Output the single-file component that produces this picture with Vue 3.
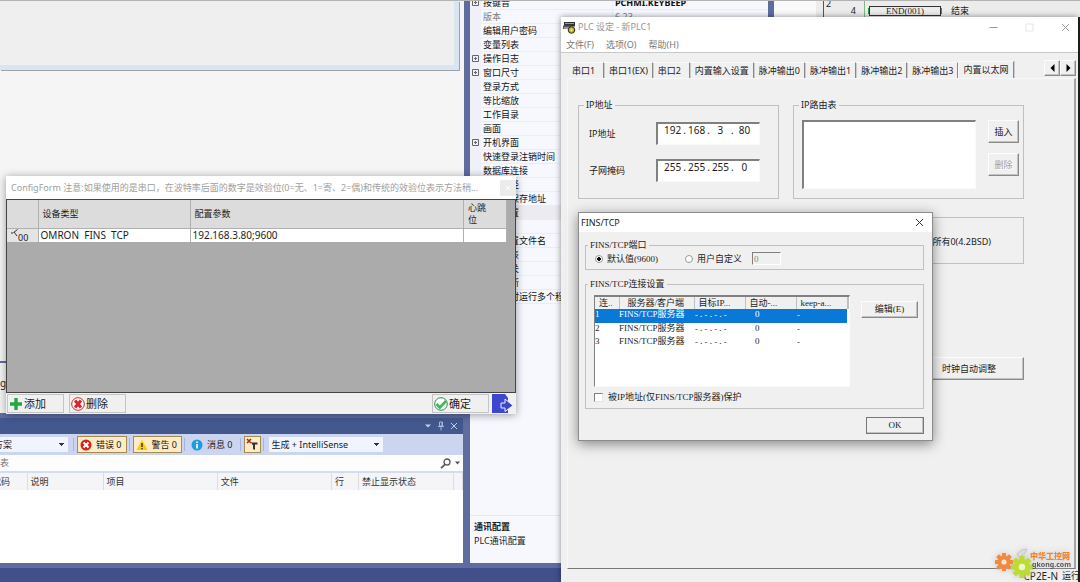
<script setup>
import { ref } from 'vue'

const properties = [
  { name: '按键音', value: 'PCHMI.KEYBEEP', expand: true, strong: true },
  { name: '版本', value: '6.23', muted: true },
  { name: '编辑用户密码' },
  { name: '变量列表' },
  { name: '操作日志', expand: true },
  { name: '窗口尺寸', expand: true },
  { name: '登录方式' },
  { name: '等比缩放' },
  { name: '工作目录' },
  { name: '画面' },
  { name: '开机界面', expand: true },
  { name: '快速登录注销时间' },
  { name: '数据库连接' },
  { name: '程序路径' },
  { name: '数据库保存地址' },
  { name: '通讯配置', selected: true },
  { name: '' },
  { name: '通讯配置文件名' },
  { name: '项目列表' },
  { name: '系统开关' },
  { name: '自动更新' },
  { name: '允许同时运行多个程序' }
]

const errorColumns = [
  { label: '代码', cls: 'c-code' },
  { label: '说明', cls: 'c-desc' },
  { label: '项目', cls: 'c-wide' },
  { label: '文件', cls: 'c-wide' },
  { label: '行', cls: 'c-line' },
  { label: '禁止显示状态', cls: 'c-state' },
  { label: '', cls: 'c-end' }
]

const tabs = ['串口1', '串口1(EX)', '串口2', '内置输入设置', '脉冲输出0', '脉冲输出1', '脉冲输出2', '脉冲输出3', '内置以太网']
const activeTab = ref(8)

const addresses = ref([
  { label: 'IP地址', parts: ['192', '168', '3', '80'] },
  { label: '子网掩码', parts: ['255', '255', '255', '0'] }
])

const connections = [1, 2, 3]
const selectedConnection = ref(1)
const portMode = ref('default')
const protect = ref(false)
</script>

<template>
  <div class="desktop">
    <div class="workspace">
      <section class="left-pane">
        <div class="designer">
          <div class="canvas"></div>
          <div class="doc-strip">g</div>
        </div>
        <div class="error-list">
          <header class="error-title">
            <button aria-label="菜单"><svg width="8" height="8" viewBox="0 0 8 8"><path d="M1 2.500h6L4 5.500z" fill="#c5cfea" /></svg></button>
            <button aria-label="固定"><svg width="8" height="10" viewBox="0 0 8 10"><path d="M2.500 1h3v4h-3zM1 5.500h6M4 5.500v4M5 1v4" fill="none" stroke="#a9b6da" /></svg></button>
            <button aria-label="关闭"><svg width="8" height="8" viewBox="0 0 8 8"><path d="M1 1l6 6M7 1l-6 6" stroke="#c5cfea" /></svg></button>
          </header>
          <div class="error-tools">
            <select class="scope" aria-label="范围"><option>方案</option></select>
            <i class="sep"></i>
            <button class="filter on">
              <svg width="12" height="12" viewBox="0 0 12 12"><circle cx="6" cy="6" r="5.500" fill="#d8211c" /><path d="M3.500 3.500l5 5M8.500 3.500l-5 5" stroke="#fff" stroke-width="2" /></svg>错误 0
            </button>
            <i class="sep"></i>
            <button class="filter on">
              <svg width="12" height="12" viewBox="0 0 12 12"><path d="M6 1l5.500 10H.5z" fill="#ffcc00" /><path d="M6 4v4M6 9v1.300" stroke="#222" stroke-width="1.300" /></svg>警告 0
            </button>
            <i class="sep"></i>
            <button class="filter">
              <svg width="12" height="12" viewBox="0 0 12 12"><circle cx="6" cy="6" r="5.500" fill="#1f9bde" /><path d="M6 2.500v1.500M6 5v4.500" stroke="#fff" stroke-width="1.600" /></svg>消息 0
            </button>
            <i class="sep"></i>
            <button class="filter icon on" aria-label="清除筛选">
              <svg width="12" height="13" viewBox="0 0 12 13"><path d="M1 1l4 4M5 1L1 5" stroke="#b3281e" stroke-width="1.600" /><path d="M5 4.500h6.500v2H9V12l-2-1V7.500z" fill="#333" /></svg>
            </button>
            <i class="sep"></i>
            <select class="source" aria-label="来源"><option>生成 + IntelliSense</option></select>
          </div>
          <div class="error-search">
            <input aria-label="搜索" placeholder="表" />
            <svg width="11" height="11" viewBox="0 0 11 11"><circle cx="7" cy="4" r="3" fill="none" stroke="#555" stroke-width="1.300" /><path d="M5 6.300L1 10.200" stroke="#555" stroke-width="1.800" /></svg>
            <svg class="caret" width="5" height="4" viewBox="0 0 5 4"><path d="M0 .5h5L2.500 3.500z" fill="#555" /></svg>
          </div>
          <table class="error-table">
            <thead>
              <tr><th v-for="(c, i) in errorColumns" :key="i" :class="c.cls">{{ c.label }}</th></tr>
            </thead>
          </table>
        </div>
      </section>

      <section class="properties">
        <div class="rows">
          <div v-for="(p, i) in properties" :key="i" class="prop" :class="{ selected: p.selected, muted: p.muted }">
            <span class="gutter">
              <svg v-if="p.expand" width="7" height="7" viewBox="0 0 7 7"><path d="M.5.5h6v6h-6zM2 3.500h3M3.500 2v3" fill="none" stroke="#666" /></svg>
            </span>
            <span class="name">{{ p.name }}</span>
            <span class="value" :class="{ strong: p.strong }">{{ p.value }}</span>
          </div>
        </div>
        <div class="description">
          <b>通讯配置</b>
          <p>PLC通讯配置</p>
        </div>
      </section>

      <section class="ladder">
        <div class="ladder-tree"></div>
        <div class="rung-no"><span>2</span><span>4</span></div>
        <div class="rung">
          <div class="end-box">END(001)</div>
          <span>结束</span>
        </div>
      </section>
    </div>
    <footer class="statusbar"></footer>

    <section class="config">
      <header class="config-title">
        <h2>ConfigForm 注意:如果使用的是串口，在波特率后面的数字是效验位(0=无、1=寄、2=偶)和传统的效验位表示方法稍...</h2>
        <button aria-label="关闭"><svg width="16" height="16" viewBox="0 0 16 16"><path d="M6 6l4 4M10 6l-4 4" stroke="#fff" /></svg></button>
      </header>
      <div class="config-body">
        <table class="device-table">
          <thead>
            <tr><th class="d-index"></th><th class="d-type">设备类型</th><th>配置参数</th><th class="d-beat">心跳<br />位</th></tr>
          </thead>
          <tbody>
            <tr>
              <td class="index"><div><svg width="7" height="8" viewBox="0 0 7 8"><path d="M0 4h2M2.500 3.500l4-3M3 3l3 4" fill="none" stroke="#333" /></svg><span>00</span></div></td>
              <td>OMRON&nbsp; FINS&nbsp; TCP</td>
              <td>192.168.3.80;9600</td>
              <td></td>
            </tr>
          </tbody>
        </table>
      </div>
      <footer class="config-foot">
        <button class="action"><svg width="14" height="14" viewBox="0 0 14 14"><path d="M7 1v12M1 7h12" stroke="#27a63f" stroke-width="3.400" /></svg>添加</button>
        <button class="action"><svg width="14" height="14" viewBox="0 0 14 14"><circle cx="7" cy="7" r="6.300" fill="#fff" stroke="#c22" /><path d="M4 3.500l6 7M10 3.500l-6 7" stroke="#e0202a" stroke-width="3" /></svg>删除</button>
        <button class="action confirm"><svg width="14" height="14" viewBox="0 0 14 14"><circle cx="7" cy="7" r="6.300" fill="#fff" stroke="#2c8a4c" /><path d="M2.500 7l3.300 3.500L12 4" fill="none" stroke="#3fb85c" stroke-width="2.600" /></svg>确定</button>
        <button class="exit" aria-label="退出"><svg width="21" height="20" viewBox="0 0 21 20"><path d="M0 0h13l3 4v15H0z" fill="#3d46cf" /><path d="M9 9h4V5l8 6.500-8 6V14H9z" fill="#3d46cf" stroke="#f0f0f0" /></svg></button>
      </footer>
    </section>

    <section class="plc">
      <header class="plc-title">
        <svg width="13" height="13" viewBox="0 0 13 13"><path d="M1 1h11v4.500H1z" fill="#333" /><path d="M2 2.500h9" stroke="#9a9a9a" /><path d="M0 4.500h8V8H0z" fill="#555" /><path d="M2 6v2M4 6v2M6 6v2" stroke="#ddd" /><circle cx="8.500" cy="9" r="3.300" fill="#b8ad38" stroke="#33300c" /><path d="M7 9h3M8.500 7.500v3" stroke="#eee27a" /></svg>
        <h2>PLC 设定 - 新PLC1</h2>
        <div class="window-buttons">
          <button aria-label="最小化"><svg width="9" height="9" viewBox="0 0 9 9"><path d="M.5 4.500h8" stroke="#999" /></svg></button>
          <button aria-label="最大化"><svg width="9" height="9" viewBox="0 0 9 9"><path d="M1 1h7v7H1z" fill="none" stroke="#e4e4e4" /></svg></button>
          <button aria-label="关闭"><svg width="9" height="9" viewBox="0 0 9 9"><path d="M1 1l7 7M8 1L1 8" stroke="#999" /></svg></button>
        </div>
      </header>
      <nav class="menu">
        <button>文件(F)</button><button>选项(O)</button><button>帮助(H)</button>
      </nav>
      <div class="plc-body">
        <div class="tab-row">
          <div class="tabs" role="tablist">
            <button v-for="(t, i) in tabs" :key="t" role="tab" :aria-selected="i === activeTab" :class="{ active: i === activeTab }" @click="activeTab = i">{{ t }}</button>
          </div>
          <div class="tab-scroll">
            <button aria-label="向左"><svg width="5" height="8" viewBox="0 0 5 8"><path d="M4.500 0v8L.5 4z" /></svg></button>
            <button aria-label="向右"><svg width="5" height="8" viewBox="0 0 5 8"><path d="M.5 0v8l4-4z" /></svg></button>
          </div>
        </div>
        <div class="pane">
          <div class="groups">
            <fieldset class="ip-group">
              <legend>IP地址</legend>
              <div v-for="a in addresses" :key="a.label" class="ip-line">
                <span>{{ a.label }}</span>
                <div class="ip-box">
                  <template v-for="(p, i) in a.parts" :key="i">
                    <i v-if="i">.</i><input v-model="a.parts[i]" :aria-label="a.label + ' ' + (i + 1)" />
                  </template>
                </div>
              </div>
            </fieldset>
            <fieldset>
              <legend>IP路由表</legend>
              <div class="route-main">
                <div class="route-list"></div>
                <div class="route-buttons">
                  <button class="classic">插入</button>
                  <button class="classic" disabled>删除</button>
                </div>
              </div>
            </fieldset>
          </div>
          <div class="broadcast">所有0(4.2BSD)</div>
          <button class="classic clock">时钟自动调整</button>
        </div>
      </div>
      <footer class="plc-status"><span>CP2E-N</span><span class="run">运行</span></footer>
    </section>

    <section class="fins">
      <header class="fins-title">
        <h2>FINS/TCP</h2>
        <button aria-label="关闭"><svg width="9" height="9" viewBox="0 0 9 9"><path d="M1 1l7 7M8 1L1 8" stroke="#333" /></svg></button>
      </header>
      <div class="fins-body">
        <fieldset>
          <legend>FINS/TCP端口</legend>
          <div class="port-line">
            <label class="default-port"><input v-model="portMode" type="radio" name="port" value="default" />默认值(9600)</label>
            <label><input v-model="portMode" type="radio" name="port" value="custom" />用户自定义</label>
            <input class="port" value="0" disabled aria-label="端口" />
          </div>
        </fieldset>
        <fieldset class="conn-group">
          <legend>FINS/TCP连接设置</legend>
          <div class="conn-main">
            <div class="conn-list">
              <table>
                <thead>
                  <tr><th class="n-no">连..</th><th class="n-side">服务器/客户端</th><th class="n-val">目标IP...</th><th class="n-val">自动-...</th><th class="n-val">keep-a...</th><th></th></tr>
                </thead>
                <tbody>
                  <tr v-for="n in connections" :key="n" :class="{ picked: n === selectedConnection }" @click="selectedConnection = n">
                    <td>{{ n }}</td><td>FINS/TCP服务器</td><td class="mono">-.-.-.-</td><td class="zero">0</td><td class="mono">-</td><td class="rest"></td>
                  </tr>
                </tbody>
              </table>
            </div>
            <button class="classic edit">编辑(E)</button>
          </div>
          <label class="protect"><input v-model="protect" type="checkbox" />被IP地址(仅FINS/TCP服务器)保护</label>
        </fieldset>
        <button class="classic ok">OK</button>
      </div>
    </section>

    <aside class="watermark">
      <svg width="40" height="34" viewBox="0 0 40 34">
        <path d="M22 6l5-4 5-1-2 4-6 4z" fill="#ddd" stroke="#aaa" stroke-width=".5" />
        <g transform="translate(9 14)">
          <g stroke="#f28a3c" stroke-width="4"><path d="M0-9V9M-9 0H9M-6.400-6.400L6.400 6.400M6.400-6.400L-6.400 6.400" /></g>
          <circle r="6.500" fill="#f28a3c" /><circle r="2.600" fill="#f4e6dc" />
        </g>
        <g transform="translate(27 19)">
          <g stroke="#bcdc35" stroke-width="5"><path d="M0-11V11M-11 0H11M-7.800-7.800L7.800 7.800M7.800-7.800L-7.800 7.800" /></g>
          <circle r="8" fill="#bcdc35" /><circle r="3.200" fill="#eef4d4" />
        </g>
      </svg>
      <div><b>中华工控网</b><span>gkong.com</span></div>
    </aside>
  </div>
</template>

<style>
body { margin: 0; }
</style>

<style scoped>
.desktop {
  position: relative;
  display: flex;
  flex-direction: column;
  height: 100vh;
  overflow: hidden;
  box-sizing: border-box;
  border-top: 1px solid #b4b4b4;
  background: #5e6ca0;
  color: #1c1c1c;
  font: 9px/12px "Noto Sans", "Noto Sans CJK SC", sans-serif;
}
.desktop * { box-sizing: border-box; }
button, input, select { font: inherit; color: inherit; margin: 0; padding: 0; border: 0; background: none; border-radius: 0; white-space: nowrap; }
h2, p { margin: 0; font-size: 9px; font-weight: 400; }
svg { display: block; flex: none; }
fieldset { margin: 0; padding: 0; border: 1px solid #c0c0c0; min-width: 0; }
legend { padding: 0 2px; margin-left: 5px; height: 12px; line-height: 12px; }
table { border-collapse: collapse; table-layout: fixed; width: 100%; }
th, td { padding: 0; text-align: left; font-weight: 400; overflow: hidden; white-space: nowrap; }

.workspace { flex: 1; display: flex; gap: 6px; min-height: 0; }
.statusbar { height: 14px; margin-top: 5px; background: #414f8b; }
.left-pane { flex: 464 1 0; min-width: 0; display: flex; flex-direction: column; }
.designer { flex: 1; display: flex; flex-direction: column; justify-content: space-between; background: #f5f5f5; }
.canvas { height: 69px; margin-right: 5px; background: #efefef; border: solid #d9e6f2; border-width: 0 5px 5px 0; box-shadow: 1px 1px 0 #9fa2a8; }
.doc-strip { height: 52px; padding-top: 14px; border-top: 2px solid #5e6ca0; background: #f5f5f5; font-size: 10px; }
.error-list { height: 145px; margin-top: 5px; margin-right: 1px; display: flex; flex-direction: column; background: #fff; }
.error-title { height: 16px; display: flex; align-items: center; justify-content: flex-end; gap: 5px; padding-right: 5px; background: #42588f; }
.error-tools { height: 21px; display: flex; align-items: center; gap: 2px; background: #cbd5ef; }
.error-tools select {
  appearance: none;
  height: 15px;
  background: #f1f4fd conic-gradient(from -45deg at 50% 100%, #333 90deg, transparent 0) no-repeat right 4px center / 5px 3px;
}
.error-tools .scope { width: 68px; text-indent: -6px; }
.error-tools .source { width: 114px; padding-left: 3px; margin-left: 2px; }
.sep { width: 2px; height: 13px; border-left: 1px solid #a9b5d6; }
.scope + .sep { margin-left: 3px; }
.filter { height: 17px; display: flex; align-items: center; gap: 4px; padding: 0 4px 0 2px; border: 1px solid transparent; }
.filter.on { background: #fdecc4; border-color: #a58a56; }
.filter.icon { width: 17px; padding: 0 1px; }
.error-search { height: 18px; display: flex; align-items: center; gap: 4px; padding-right: 3px; border-bottom: 2px solid #d4dcf0; background: #fdfdfd; }
.error-search input { flex: 1; min-width: 0; }
.error-search input::placeholder { color: #777; }
.error-table { background: #f5f5f7; }
.error-table th { height: 17px; padding-left: 3px; border: 0 solid #dcdce2; border-right-width: 1px; color: #333; }
.error-table .c-code { width: 27px; padding: 0; text-indent: -8px; }
.c-desc { width: 76px; }
.c-wide { width: 25%; }
.c-line { width: 27px; }
.c-state { width: 95px; }
.c-end { width: 9px; }

.properties { flex: 298 1 0; min-width: 0; display: flex; flex-direction: column; background: #f7f8fe; }
.rows { flex: 1; min-height: 0; margin-top: -5px; overflow: hidden; clip-path: inset(5px 0 0 0); }
.prop { height: 14px; display: flex; line-height: 13px; color: #111; }
.gutter { width: 11px; padding: 3px 2px; background: #f0f0f8; }
.name { flex: 0 0 132px; padding-left: 2px; border-bottom: 1px solid #ececf5; border-right: 1px solid #ececf5; white-space: nowrap; }
.value { flex: 1; padding-left: 2px; border-bottom: 1px solid #ececf5; white-space: nowrap; }
.value.strong { font-weight: 700; }
.muted { color: #808080; }
.selected .name { background: #ececf0; }
.description { height: 48px; padding: 4px; border-top: 1px solid #e8e8f2; line-height: 14px; }

.ladder { flex: 306 1 0; min-width: 0; display: flex; background: #ececec; }
.ladder-tree { flex: 0 0 42px; background: #fafafa; }
.rung-no { flex: 0 0 41px; margin-left: 7px; display: flex; justify-content: space-between; padding: 0 8px 0 2px; border-left: 1px solid #555; height: 17px; line-height: 20px; }
.rung-no span:first-child { line-height: 5px; }
.rung { flex: 1; display: flex; gap: 10px; align-items: flex-start; padding-left: 4px; border-left: 1px solid #7fb88a; line-height: 20px; }
.end-box { width: 72px; height: 10px; margin-top: 5px; border: 1px solid #333; text-align: center; font: 9px/8px "Liberation Serif", serif; box-shadow: -3px 0 0 -2px #2a9a3a, 3px 0 0 -2px #2a9a3a; }

.config { position: absolute; left: 6px; right: calc(50% + 24px); top: 175px; background: #f0f0f0; box-shadow: 0 1px 8px rgba(0, 0, 0, .38); }
.config-title { display: flex; justify-content: space-between; align-items: center; height: 23px; padding-left: 5px; background: #fff; color: #a0a0a0; }
.config-title h2 { min-width: 0; overflow: hidden; white-space: nowrap; }
.config-title button { flex: none; width: 16px; height: 16px; background: #ececec; }
.config-body { height: 194px; padding-right: 8px; border: 1px solid #444; background: #ababab; }
.device-table th { height: 28px; padding-left: 4px; background: #dcdcdc; border: solid #b0b0b0; border-width: 0 1px 1px 0; }
.device-table td { height: 14px; padding-left: 2px; background: #fff; border-right: 1px solid #b0b0b0; font-size: 10px; line-height: 13px; }
.device-table .index { padding-left: 4px; background: #e4e4e4; font-size: 9px; }
.index div { display: flex; height: 13px; }
.index span { padding-top: 2px; }
.d-index { width: 31px; }
.d-type { width: 152px; }
.d-beat { width: 43px; }
.config-foot { display: flex; gap: 5px; align-items: center; height: 21px; padding: 0 3px 0 1px; font-size: 11px; }
.action { width: 57px; height: 19px; display: flex; align-items: center; gap: 1px; padding-left: 1px; border: 1px solid #c4c4c4; background: #f0f0f0; }
.confirm { margin-left: auto; }
.exit { margin-left: -2px; }

.plc { position: absolute; left: calc(50% + 21px); right: 2px; top: 16px; bottom: 0; display: flex; flex-direction: column; background: #f0f0f0; box-shadow: 0 0 6px rgba(0, 0, 0, .45), 3px 0 0 #222; }
.plc-title { display: flex; align-items: center; gap: 2px; height: 20px; padding: 0 8px 0 2px; background: #fff; color: #969696; }
.window-buttons { margin-left: auto; display: flex; gap: 27px; }
.menu { display: flex; gap: 12px; height: 16px; padding-left: 5px; background: #fff; border-bottom: 1px solid #c8c8c8; color: #777; }
.menu button { height: 15px; }
.plc-body { flex: 1; min-height: 0; display: flex; flex-direction: column; padding: 8px 2px 0 6px; }
.tab-row { display: flex; justify-content: space-between; height: 17px; }
.tabs { display: flex; min-width: 0; padding-top: 1px; }
.tabs button { min-width: 37px; height: 16px; padding: 0 4px 0 5px; border: solid #fafafa; border-width: 1px 1px 0 0; border-right-color: #888; box-shadow: 1px 0 0 #ccc; text-align: left; }
.tabs .active { padding: 0 5px 0 4px; margin-top: -1px; height: 17px; border-left: 1px solid #fafafa; }
.tab-scroll { display: flex; margin-top: -1px; }
.tab-scroll button, .classic { border: 1px solid; border-color: #fcfcfc #8a8a8a #8a8a8a #fcfcfc; box-shadow: inset -1px -1px 0 #c2c2c2; background: #f0f0f0; }
.tab-scroll button { width: 16px; height: 16px; display: grid; place-items: center; }
.pane { flex: 1; min-height: 0; padding: 20px 50px 0 10px; border: solid; border-width: 1px 2px 1px 1px; border-color: #f8f8f8 #a4a4a4 #777 #f8f8f8; }
.groups { display: grid; grid-template-columns: 201fr 231fr; gap: 14px; }
.groups fieldset { height: 100px; }
.ip-group legend { margin-bottom: 11px; }
.ip-line { display: flex; justify-content: space-between; align-items: center; padding: 0 18px 0 10px; margin-bottom: 14px; }
.ip-box { display: flex; width: 104px; height: 23px; padding: 0 4px; background: #fff; border: 1px solid #fafafa; border-top: 2px solid #808080; border-left: 2px solid #808080; font-size: 10px; line-height: 13px; }
.ip-box input { flex: 1; width: 0; min-width: 0; height: 13px; text-align: center; }
.ip-box i { font-style: normal; }
.route-main { display: flex; gap: 12px; padding: 9px 4px 0 8px; }
.route-list { flex: 1; height: 69px; background: #fff; border: 1px solid #fafafa; border-top: 2px solid #808080; border-left: 2px solid #808080; }
.route-buttons { display: flex; flex-direction: column; gap: 10px; width: 31px; }
.route-buttons button { height: 23px; }
.classic:disabled { color: #a0a0a0; text-shadow: 1px 1px 0 #fff; }
.broadcast { height: 47px; margin-top: 18px; padding-right: 32px; border: 1px solid #c0c0c0; text-align: right; line-height: 47px; }
.clock { display: block; width: 110px; height: 23px; margin: 93px 0 0 auto; }
.plc-status { height: 13px; display: flex; justify-content: flex-end; gap: 4px; overflow: hidden; font-size: 10px; line-height: 14px; }
.run { width: 16px; font-size: 9px; overflow: hidden; white-space: nowrap; }

.fins { position: absolute; left: calc(50% + 38px); right: 147px; top: 211px; background: #f0f0f0; border: 1px solid #8c8c8c; box-shadow: 0 3px 12px rgba(0, 0, 0, .45); font-family: "Liberation Serif", "Noto Sans CJK SC", serif; }
.fins-title { display: flex; align-items: center; justify-content: space-between; height: 19px; padding: 0 8px 0 2px; background: #fff; font-family: "Noto Sans", sans-serif; }
.fins-body { display: flex; flex-direction: column; padding: 7px 8px 6px 6px; }
.fins legend { margin-left: 2px; }
.port-line { display: flex; align-items: center; height: 18px; padding: 0 9px 3px; }
.port-line label { display: flex; align-items: center; gap: 4px; }
.default-port { width: 90px; }
.port-line input[type="radio"] { appearance: none; width: 8px; height: 8px; border-radius: 50%; border: 1px solid #999; background: #fff; }
.port-line input[type="radio"]:checked { background: radial-gradient(circle, #111 0 2px, #fff 2px); }
.port { width: 29px; height: 13px; margin-left: 10px; padding-left: 1px; border: 1px solid #fff; border-top: 1px solid #808080; border-left: 1px solid #808080; color: #888; }
.conn-group { height: 131px; margin-top: 8px; }
.conn-main { display: flex; align-items: flex-start; gap: 11px; padding: 5px 5px 0 8px; }
.conn-list { flex: 1; min-width: 0; height: 92px; background: #fff; border: 1px solid #fafafa; border-top: 2px solid #808080; border-left: 1px solid #808080; }
.conn-list th { height: 12px; padding-left: 4px; line-height: 11px; background: #f0f0f0; border-right: 1px solid #c0c0c0; }
.conn-list td { height: 13px; line-height: 11px; vertical-align: top; }
.conn-list .picked td { height: 14px; }
.conn-list .n-side { padding-left: 8px; }
.n-no { width: 24px; }
.n-side { width: 75px; }
.n-val { width: 51px; }
.conn-list .zero { padding-left: 10px; }
.mono { font-family: "Liberation Mono", monospace; font-size: 8px; }
.picked td { background: #0a78d7; color: #fff; }
.conn-list .picked .rest { background: #fff; }
.edit { width: 57px; height: 17px; margin-top: 6px; line-height: 13px; }
.protect { display: flex; align-items: center; gap: 5px; margin: 4px 0 0 8px; }
.protect input { appearance: none; width: 9px; height: 9px; border: 1px solid #e4e4e4; border-top-color: #808080; border-left-color: #808080; background: #fff; }
.protect input:checked { background: #333; }
.ok { align-self: flex-end; width: 58px; height: 17px; margin-top: 8px; border-color: #777; line-height: 13px; }

.watermark { position: absolute; right: 9px; bottom: 0; display: flex; filter: drop-shadow(0 0 3px #c8c8c8); }
.watermark div { display: flex; flex-direction: column; margin-left: -5px; padding-top: 3px; font: 700 8px/9px "Noto Sans", "Noto Sans CJK SC", sans-serif; }
.watermark b { color: #f08530; }
.watermark span { margin-left: 2px; font-size: 7px; color: #555; }
</style>
